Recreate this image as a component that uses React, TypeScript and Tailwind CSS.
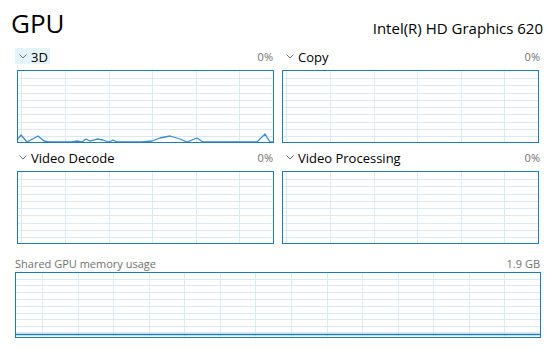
import React from 'react';

const font = { fontFamily: '"Open Sans", "Noto Sans", sans-serif' };

const usage3d =
  '0,70 4,65 10,72 21,66 27,71 32,72 55,72 60,71 65,72 69,69 73,71 80,69 86,70 92,72 96,70 100,72 125,72 135,71 143,68 153,66 163,69 170,72 175,70 180,68 186,72 240,72 248,64 253,72 257,72';

const Chevron = () => (
  <svg width="8" height="5" viewBox="0 0 8 5" className="shrink-0">
    <polyline points="0.5,0.5 4,4 7.5,0.5" fill="none" stroke="#707070" strokeWidth="1" />
  </svg>
);

type ChartProps = {
  w: number;
  h: number;
  cols: number[];
  rows: number[];
  line?: string;
  flat?: number;
};

const Chart = ({ w, h, cols, rows, line, flat }: ChartProps) => (
  <div className="relative border border-[#1b7bbd] bg-white overflow-hidden" style={{ width: w, height: h }}>
    <svg width={w - 2} height={h - 2} viewBox={`1 1 ${w - 2} ${h - 2}`} className="block">
      {rows.map((y) => (
        <line key={'r' + y} x1={0} x2={w} y1={y + 0.5} y2={y + 0.5} stroke="#d9eaf5" strokeWidth="1" />
      ))}
      {cols.map((x) => (
        <line key={'c' + x} x1={x + 0.5} x2={x + 0.5} y1={0} y2={h} stroke="#d9eaf5" strokeWidth="1" />
      ))}
      {line && <polyline points={line} fill="none" stroke="#3c8dc6" strokeWidth="1.3" strokeLinejoin="round" />}
      {flat !== undefined && (
        <line x1={0} x2={w} y1={flat + 0.5} y2={flat + 0.5} stroke="#1b7bbd" strokeWidth="1.5" />
      )}
    </svg>
  </div>
);

const smallCols = [4, 48, 92, 135, 179, 222];
const smallRows = [8, 15, 23, 30, 37, 44, 52, 59, 66];
const memCols = [27, 63, 98, 134, 169, 205, 240, 276, 312, 347, 383, 418, 454, 489];
const memRows = [7, 13, 20, 27, 34, 41, 47, 54, 60];

const Engine = ({ name, active, line, right }: { name: string; active?: boolean; line?: string; right?: boolean }) => (
  <div className={`flex flex-col ${right ? 'items-start' : 'items-end'}`}>
    <div className="flex w-full h-[16px] items-center justify-between">
      <div className={`flex items-center gap-[4px] h-[16px] pl-[4px] pr-[2px] ${active ? 'bg-[#e5f3fb]' : ''}`}>
        <Chevron />
        <span className="text-[13px] leading-none text-black translate-y-[1px]">{name}</span>
      </div>
      <span className="text-[11px] leading-none text-[#707070] pr-[1px]">0%</span>
    </div>
    <div className="mt-[6px]">
      <Chart w={257} h={73} cols={smallCols} rows={smallRows} line={line} />
    </div>
  </div>
);

export default function App() {
  return (
    <div className="w-[551px] h-[350px] bg-white overflow-hidden" style={font}>
      <div className="flex items-start justify-between h-[48px] pl-[11px] pr-[8px]">
        <span className="text-[26px] leading-none text-black mt-[10px]">GPU</span>
        <span className="text-[15px] leading-none text-black mt-[21px]">Intel(R) HD Graphics 620</span>
      </div>
      <div className="mx-[15px] w-[526px]">
        <div className="grid grid-cols-2 gap-x-[8px] gap-y-[6px]">
          <Engine name="3D" active line={usage3d} />
          <Engine name="Copy" right />
          <Engine name="Video Decode" />
          <Engine name="Video Processing" right />
        </div>
        <div className="flex items-end justify-between h-[14px] mt-[11px] text-[11px] leading-none text-[#707070]">
          <span>Shared GPU memory usage</span>
          <span className="pr-[1px]">1.9 GB</span>
        </div>
        <div className="mt-[3px]">
          <Chart w={526} h={66} cols={memCols} rows={memRows} flat={62} />
        </div>
      </div>
    </div>
  );
}
